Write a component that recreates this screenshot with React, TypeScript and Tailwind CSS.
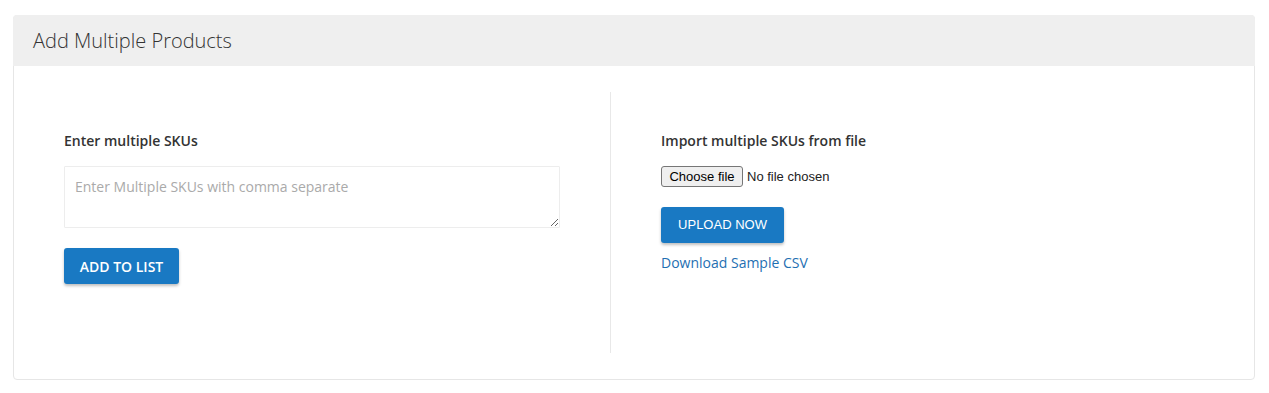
export default function App() {
  return (
    <div className="w-[1269px] h-[393px] bg-white pt-[15px] pl-[13px]" style={{ fontFamily: '"Open Sans", sans-serif' }}>
      <div className="w-[1242px] h-[365px] border border-[#e6e6e6] rounded-[4px] flex flex-col">
        <div className="h-[51px] bg-[#efefef] rounded-t-[4px] flex items-center pl-[20px] -mx-px -mt-px">
          <h2 className="text-[20px] font-light text-[#333]">Add Multiple Products</h2>
        </div>
        <div className="flex px-[25px] pt-[26px]">
          <div className="w-[572px] h-[261px] border-r border-[#e8e8e8] px-[25px] pt-[39px]">
            <label className="block text-[14px] font-semibold text-[#333] leading-[20px]">Enter multiple SKUs</label>
            <textarea
              className="block mt-[15px] w-[496px] h-[62px] border border-[#ededed] rounded-[1px] px-[10px] py-[9px] text-[14px] text-[#333] placeholder:text-[#aaa] outline-none"
              placeholder="Enter Multiple SKUs with comma separate"
            />
            <button className="mt-[20px] h-[36px] w-[115px] bg-[#1979c3] text-white text-[14px] font-semibold rounded-[3px] shadow-[0_2px_3px_rgba(0,0,0,0.25)]">
              ADD TO LIST
            </button>
          </div>
          <div className="pl-[50px] pt-[39px]">
            <label className="block text-[14px] font-semibold text-[#333] leading-[20px]">Import multiple SKUs from file</label>
            <div className="mt-[15px] flex items-center h-[21px] text-[13px] text-[#222]" style={{ fontFamily: '"Liberation Sans", Arial, sans-serif' }}>
              <span className="h-[21px] w-[82px] flex items-center justify-center border border-[#767676] bg-[#efefef] rounded-[3px] text-black">Choose file</span>
              <span className="ml-[4px]">No file chosen</span>
            </div>
            <button
              className="block mt-[20px] h-[36px] w-[123px] bg-[#1979c3] text-white text-[13px] rounded-[3px] shadow-[0_2px_3px_rgba(0,0,0,0.25)]"
              style={{ fontFamily: '"Liberation Sans", Arial, sans-serif' }}
            >
              UPLOAD NOW
            </button>
            <a href="#" className="block mt-[10px] text-[14px] text-[#1f6fb2] leading-[20px]">Download Sample CSV</a>
          </div>
        </div>
      </div>
    </div>
  );
}
